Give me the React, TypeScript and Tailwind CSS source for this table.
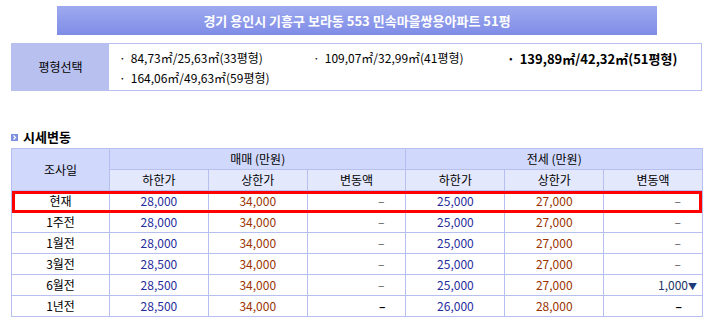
import React from "react";

const sizes = [
  { label: "84,73㎡/25,63㎡(33평형)", active: false },
  { label: "109,07㎡/32,99㎡(41평형)", active: false },
  { label: "139,89㎡/42,32㎡(51평형)", active: true },
  { label: "164,06㎡/49,63㎡(59평형)", active: false },
];

type Row = {
  date: string;
  saleLow: string;
  saleHigh: string;
  saleDiff: string;
  rentLow: string;
  rentHigh: string;
  rentDiff: string;
  last?: boolean;
};

const rows: Row[] = [
  { date: "현재", saleLow: "28,000", saleHigh: "34,000", saleDiff: "-", rentLow: "25,000", rentHigh: "27,000", rentDiff: "-" },
  { date: "1주전", saleLow: "28,000", saleHigh: "34,000", saleDiff: "-", rentLow: "25,000", rentHigh: "27,000", rentDiff: "-" },
  { date: "1월전", saleLow: "28,000", saleHigh: "34,000", saleDiff: "-", rentLow: "25,000", rentHigh: "27,000", rentDiff: "-" },
  { date: "3월전", saleLow: "28,500", saleHigh: "34,000", saleDiff: "-", rentLow: "25,000", rentHigh: "27,000", rentDiff: "-" },
  { date: "6월전", saleLow: "28,500", saleHigh: "34,000", saleDiff: "-", rentLow: "25,000", rentHigh: "27,000", rentDiff: "1,000" },
  { date: "1년전", saleLow: "28,500", saleHigh: "34,000", saleDiff: "-", rentLow: "26,000", rentHigh: "28,000", rentDiff: "-", last: true },
];

function Diff({ value, last }: { value: string; last?: boolean }) {
  if (value === "-") {
    return (
      <span className={last ? "pr-[15px] font-bold" : "pr-[16px] text-[#555]"}>–</span>
    );
  }
  return (
    <span className="text-[#1c3564]">
      {value}
      <span className="text-[9px] text-[#1c3a78]">▼</span>
    </span>
  );
}

export default function App() {
  const cell = "border border-[#b6bfef] h-[21px] p-0 text-center";
  return (
    <div
      className="w-[714px] h-[330px] bg-white text-[12px] leading-none text-black"
      style={{ fontFamily: '"Noto Sans CJK KR", "Noto Sans", sans-serif' }}
    >
      <div className="pt-[6px] pl-[57px]">
        <div className="w-[600px] h-[29px] flex items-center justify-center bg-gradient-to-b from-[#9eaaef] to-[#7f8ce6] text-white text-[13px] font-bold">
          경기 용인시 기흥구 보라동 553 민속마을쌍용아파트 51평
        </div>
      </div>

      <div className="ml-[11px] mt-[8px] w-[691px] h-[48px] flex border border-[#b8c0ef]">
        <div className="w-[97px] bg-[#b8c0f0] flex items-center justify-center">평형선택</div>
        <div className="flex-1 grid grid-cols-3 content-center gap-y-[7px] pl-[10px] pt-[1px]">
          {sizes.map((s) => (
            <div key={s.label} className={s.active ? "font-bold text-[13px]" : ""}>
              <span className="mr-[5px]">·</span>
              {s.label}
            </div>
          ))}
        </div>
      </div>

      <div className="ml-[11px] mt-[38px] flex items-center gap-[5px] h-[14px]">
        <div className="w-[7px] h-[7px] bg-[#7f8fe0] flex items-center justify-center mt-[3px]">
          <svg width="5" height="5" viewBox="0 0 5 5">
            <path d="M1.5 0.5 L3.5 2.5 L1.5 4.5" stroke="white" strokeWidth="1.2" fill="none" />
          </svg>
        </div>
        <span className="text-[13px] font-bold">시세변동</span>
      </div>

      <div className="relative ml-[11px] mt-[5px] w-[692px]">
        <table className="w-[692px] border-collapse table-fixed">
          <colgroup>
            <col className="w-[98px]" />
            <col />
            <col />
            <col />
            <col />
            <col />
            <col />
          </colgroup>
          <thead>
            <tr className="bg-[#d0d8fc]">
              <th rowSpan={2} className={`${cell} font-normal`}>조사일</th>
              <th colSpan={3} className={`${cell} font-normal`}>매매 (만원)</th>
              <th colSpan={3} className={`${cell} font-normal`}>전세 (만원)</th>
            </tr>
            <tr className="bg-[#e3e8fd]">
              <th className={`${cell} font-normal`}>하한가</th>
              <th className={`${cell} font-normal`}>상한가</th>
              <th className={`${cell} font-normal`}>변동액</th>
              <th className={`${cell} font-normal`}>하한가</th>
              <th className={`${cell} font-normal`}>상한가</th>
              <th className={`${cell} font-normal`}>변동액</th>
            </tr>
          </thead>
          <tbody>
            {rows.map((r) => (
              <tr key={r.date}>
                <td className={cell}>{r.date}</td>
                <td className={`${cell} text-[#1f2c9c]`}>{r.saleLow}</td>
                <td className={`${cell} text-[#9a3300]`}>{r.saleHigh}</td>
                <td className={`${cell} !text-right pr-[5px]`}>
                  <Diff value={r.saleDiff} last={r.last} />
                </td>
                <td className={`${cell} text-[#1f2c9c]`}>{r.rentLow}</td>
                <td className={`${cell} text-[#9a3300]`}>{r.rentHigh}</td>
                <td className={`${cell} !text-right pr-[5px]`}>
                  <Diff value={r.rentDiff} last={r.last} />
                </td>
              </tr>
            ))}
          </tbody>
        </table>
        <div className="absolute left-[1px] top-[43px] w-[690px] h-[22px] border-[3px] border-[#ff0000] pointer-events-none" />
      </div>
    </div>
  );
}
